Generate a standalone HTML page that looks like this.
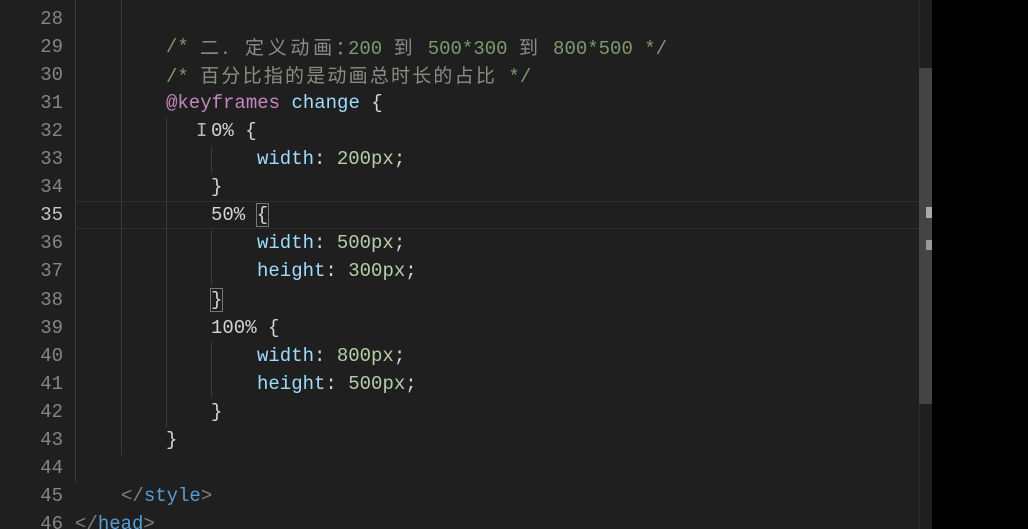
<!DOCTYPE html>
<html><head><meta charset="utf-8"><style>
html,body{margin:0;padding:0;width:1028px;height:529px;overflow:hidden;background:#000;}
#ed{position:absolute;left:0;top:0;width:932px;height:529px;background:#1f1f1f;overflow:hidden;}
.ln{position:absolute;left:0;width:63px;text-align:right;color:#858585;font:19px/28px "Liberation Mono",monospace;}
.c{position:absolute;white-space:pre;font:19px/28px "Liberation Mono","Noto Sans CJK SC",monospace;color:#d4d4d4;}
.g{position:absolute;width:1px;background:#3a3a3a;}
.cm{color:#7f9a6a}.cj{color:#8c8c84;letter-spacing:3.7px;font-family:"Noto Sans CJK SC",sans-serif;}
.at{color:#c586c0}.nm{color:#9cdcfe}.pr{color:#9cdcfe}.v{color:#b5cea8}.tg{color:#569cd6}.br{color:#808080}
.box{outline:1px solid #777;}
</style></head><body>
<div id="ed">
<div style="position:absolute;left:75px;top:201px;width:845px;height:26px;border-top:1px solid #2e2e2e;border-bottom:1px solid #2e2e2e;"></div>
<div class="g" style="left:75px;top:0;height:482px"></div>
<div class="g" style="left:121px;top:0;height:455px"></div>
<div class="g" style="left:166px;top:118px;height:310px"></div>
<div class="g" style="left:211px;top:146px;height:28px"></div>
<div class="g" style="left:211px;top:230px;height:56px"></div>
<div class="g" style="left:211px;top:342px;height:56px"></div>

<div class="ln" style="top:5px">28</div>
<div class="ln" style="top:33px">29</div>
<div class="ln" style="top:61px">30</div>
<div class="ln" style="top:89px">31</div>
<div class="ln" style="top:117px">32</div>
<div class="ln" style="top:145px">33</div>
<div class="ln" style="top:173px">34</div>
<div class="ln" style="top:201px;color:#c6c6c6">35</div>
<div class="ln" style="top:229px">36</div>
<div class="ln" style="top:257px">37</div>
<div class="ln" style="top:286px">38</div>
<div class="ln" style="top:314px">39</div>
<div class="ln" style="top:342px">40</div>
<div class="ln" style="top:370px">41</div>
<div class="ln" style="top:398px">42</div>
<div class="ln" style="top:426px">43</div>
<div class="ln" style="top:454px">44</div>
<div class="ln" style="top:482px">45</div>
<div class="ln" style="top:510px">46</div>

<div class="c cm" style="left:166px;top:33px">/* </div>
<div class="c cj" style="left:200px;top:33px">二.</div>
<div class="c cj" style="left:245px;top:33px">定义动画：</div>
<div class="c cm" style="left:348px;top:33px">200 <span class="cj">到</span> 500*300 <span class="cj">到</span> 800*500 */</div>
<div class="c cm" style="left:166px;top:61px">/* <span class="cj" style="letter-spacing:2.2px">百分比指的是动画总时长的占比</span> */</div>
<div class="c" style="left:166px;top:89px"><span class="at">@keyframes</span> <span class="nm">change</span> {</div>
<div class="c" style="left:196px;top:117px;color:#bbb">I</div>
<div class="c" style="left:211px;top:117px">0% {</div>
<div class="c" style="left:257px;top:145px"><span class="pr">width</span>: <span class="v">200px</span>;</div>
<div class="c" style="left:211px;top:173px">}</div>
<div class="c" style="left:211px;top:201px">50% <span class="box">{</span></div>
<div class="c" style="left:257px;top:229px"><span class="pr">width</span>: <span class="v">500px</span>;</div>
<div class="c" style="left:257px;top:257px"><span class="pr">height</span>: <span class="v">300px</span>;</div>
<div class="c" style="left:211px;top:286px"><span class="box">}</span></div>
<div class="c" style="left:211px;top:314px">100% {</div>
<div class="c" style="left:257px;top:342px"><span class="pr">width</span>: <span class="v">800px</span>;</div>
<div class="c" style="left:257px;top:370px"><span class="pr">height</span>: <span class="v">500px</span>;</div>
<div class="c" style="left:211px;top:398px">}</div>
<div class="c" style="left:166px;top:426px">}</div>
<div class="c" style="left:121px;top:482px"><span class="br">&lt;/</span><span class="tg">style</span><span class="br">&gt;</span></div>
<div class="c" style="left:75px;top:510px"><span class="br">&lt;/</span><span class="tg">head</span><span class="br">&gt;</span></div>

<div style="position:absolute;left:919px;top:0;width:1px;height:529px;background:#2a2a2a"></div>
<div style="position:absolute;left:919px;top:68px;width:13px;height:336px;background:#444"></div>
<div style="position:absolute;left:926px;top:207px;width:6px;height:11px;background:#aaa"></div>
<div style="position:absolute;left:926px;top:240px;width:6px;height:10px;background:#999"></div>
</div>
</body></html>
